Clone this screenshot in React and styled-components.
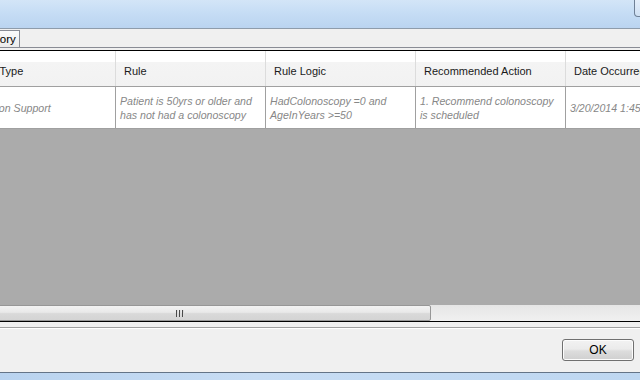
import styled, { createGlobalStyle } from 'styled-components'

const GlobalStyle = createGlobalStyle`
  html, body {
    margin: 0;
    padding: 0;
    background: #f0f0f0;
  }
  body {
    font-family: 'Liberation Sans', Arial, sans-serif;
  }
`

const Window = styled.div`
  width: 640px;
  height: 380px;
  overflow: hidden;
  display: flex;
  flex-direction: column;
  background: #f0f0f0;
`

const TitleBar = styled.div`
  height: 28px;
  flex: none;
  display: flex;
  justify-content: flex-end;
  align-items: flex-start;
  background: linear-gradient(180deg, #d3e5f7 0%, #c6ddf5 45%, #bad4f0 100%);
  border-bottom: 1px solid #8e9cab;
`

const ControlEdge = styled.div`
  width: 10px;
  height: 16px;
  margin-right: -6px;
  border: 1px solid #6f8096;
  border-top: none;
  border-radius: 0 0 0 4px;
  background: linear-gradient(180deg, #e4eefa, #cfe0f3);
`

const TabStrip = styled.div`
  height: 18px;
  flex: none;
  display: flex;
  align-items: flex-end;
  border-bottom: 1px solid #898c95;
`

const Tab = styled.div`
  height: 16px;
  margin-left: -25px;
  padding: 0 3px 0 4px;
  font-size: 11.5px;
  line-height: 17px;
  color: #000;
  background: linear-gradient(180deg, #fbfbfb, #ebebeb);
  border: 1px solid #898c95;
  border-bottom: none;
`

const GridFrame = styled.div`
  margin-top: 2px;
  height: 270px;
  flex: none;
  display: flex;
  flex-direction: column;
  border-top: 1px solid #000;
  border-bottom: 1px solid #000;
  box-shadow: inset 0 1px 0 #c8c8c8;
  overflow: hidden;
`

const Rows = styled.div`
  flex: 1;
  display: flex;
  flex-direction: column;
  background: #ababab;
  overflow: hidden;
`

const Row = styled.div`
  display: flex;
  flex: none;
  margin-left: -34px;
  height: ${(p) => p.$height}px;
  background: ${(p) =>
    p.$header
      ? 'linear-gradient(180deg, #ffffff 0%, #ffffff 30%, #f4f4f4 31%, #f2f2f2 100%)'
      : '#ffffff'};
  border-bottom: 1px solid #a0a0a0;
`

const Cell = styled.div`
  width: 150px;
  flex: none;
  box-sizing: border-box;
  display: flex;
  align-items: center;
  padding: ${(p) => (p.$header ? '5px 8px 0' : '1px 4px 0')};
  border-right: 1px solid ${(p) => (p.$header ? '#dcdcdc' : '#a0a0a0')};
  font-size: ${(p) => (p.$header ? '11px' : '10.6px')};
  font-style: ${(p) => (p.$header ? 'normal' : 'italic')};
  color: ${(p) => (p.$header ? '#1a1a1a' : '#878787')};
  line-height: 14px;
  white-space: ${(p) => (p.$wrap ? 'normal' : 'nowrap')};
  overflow: hidden;
`

const ScrollBar = styled.div`
  height: 16px;
  flex: none;
  display: flex;
  background: linear-gradient(180deg, #e6e6e6, #f0f0f0);
  overflow: hidden;
`

const Thumb = styled.div`
  width: 503px;
  margin-left: -72px;
  flex: none;
  box-sizing: border-box;
  display: flex;
  align-items: center;
  justify-content: center;
  border: 1px solid #979797;
  border-radius: 2px;
  background: linear-gradient(180deg, #f3f3f3 0%, #e9e9e9 45%, #d9d9d9 55%, #d4d4d4 100%);
`

const Grip = styled.div`
  display: flex;
  gap: 1px;
`

const GripBar = styled.span`
  width: 2px;
  height: 7px;
  background: linear-gradient(90deg, #4a4a4a 50%, #dcdcdc 50%);
`

const Footer = styled.div`
  flex: 1;
  display: flex;
  justify-content: flex-end;
  align-items: flex-start;
  margin-top: 5px;
  padding: 11px 6px 0 0;
  border-top: 1px solid #a0a0a0;
  box-shadow: inset 0 1px 0 #ffffff;
`

const OkButton = styled.button`
  width: 72px;
  height: 22px;
  padding: 0;
  font-family: 'Liberation Sans', Arial, sans-serif;
  font-size: 12px;
  color: #000;
  border: 1px solid #707070;
  border-radius: 3px;
  background: linear-gradient(180deg, #f2f2f2 0%, #ebebeb 45%, #dddddd 55%, #cfcfcf 100%);
  box-shadow: inset 0 0 0 1px #fcfcfc;
`

const BottomFrame = styled.div`
  height: 7px;
  flex: none;
  border-top: 1px solid #647487;
  background: linear-gradient(90deg, #b9d3ef, #c8ddf4 40%, #bed7f1);
`

const columns = [
  { title: 'Rule Type', value: 'Decision Support' },
  { title: 'Rule', value: 'Patient is 50yrs or older and has not had a colonoscopy', wrap: true },
  { title: 'Rule Logic', value: 'HadColonoscopy =0 and AgeInYears >=50', wrap: true },
  { title: 'Recommended Action', value: '1. Recommend colonoscopy is scheduled', wrap: true },
  { title: 'Date Occurred', value: '3/20/2014 1:45:00 PM' },
]

export default function App() {
  return (
    <Window>
      <GlobalStyle />
      <TitleBar>
        <ControlEdge />
      </TitleBar>
      <TabStrip>
        <Tab>History</Tab>
      </TabStrip>
      <GridFrame>
        <Rows>
          <Row $header $height={35}>
            {columns.map((c) => (
              <Cell key={c.title} $header>
                {c.title}
              </Cell>
            ))}
          </Row>
          <Row $height={41}>
            {columns.map((c) => (
              <Cell key={c.title} $wrap={c.wrap}>
                {c.value}
              </Cell>
            ))}
          </Row>
        </Rows>
        <ScrollBar>
          <Thumb>
            <Grip>
              <GripBar />
              <GripBar />
              <GripBar />
            </Grip>
          </Thumb>
        </ScrollBar>
      </GridFrame>
      <Footer>
        <OkButton>OK</OkButton>
      </Footer>
      <BottomFrame />
    </Window>
  )
}
